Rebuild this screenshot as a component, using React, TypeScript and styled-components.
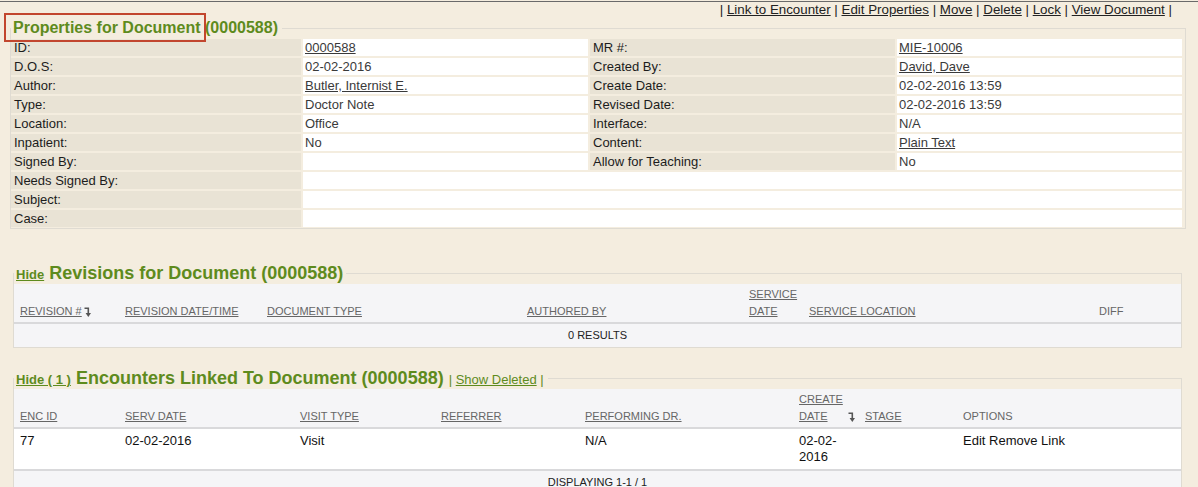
import React from 'react';
import styled, { createGlobalStyle } from 'styled-components';

const GREEN = '#5e8b1d';

const GlobalStyle = createGlobalStyle`
  html {
    overflow: hidden;
  }
  body {
    margin: 0;
    background: #f4eddf;
    font-family: 'Liberation Sans', Arial, sans-serif;
    color: #222;
  }
`;

const Page = styled.div`
  margin-top: 1px;
  border-top: 1px solid #6a6a6a;
`;

const ActionBar = styled.div`
  height: 16px;
  line-height: 16px;
  font-size: 13.33px;
  text-align: right;
  padding-right: 26px;
  color: #222;
`;

const ActionLink = styled.a`
  color: #222;
  text-decoration: underline;
  cursor: pointer;
`;

const Box = styled.fieldset<{ $top: number; $left: number; $right: number }>`
  margin: ${(p) => p.$top}px ${(p) => p.$right}px 0 ${(p) => p.$left}px;
  padding: 0;
  border: 1px solid #dfdbd2;
  min-width: 0;
`;

const Legend = styled.legend<{ $size: number; $lh: number; $padRight: number }>`
  position: relative;
  padding: 0 ${(p) => p.$padRight}px 0 2px;
  font-size: ${(p) => p.$size}px;
  line-height: ${(p) => p.$lh}px;
  font-weight: bold;
  color: ${GREEN};
  white-space: nowrap;
`;

const Marker = styled.span`
  position: absolute;
  left: -7px;
  top: -5px;
  width: 202px;
  height: 29px;
  box-sizing: border-box;
  border: 2px solid #c2462e;
  pointer-events: none;
`;

const HideLink = styled.a`
  font-size: 13px;
  line-height: 14px;
  font-weight: bold;
  color: ${GREEN};
  text-decoration: underline;
  cursor: pointer;
`;

const Extra = styled.span`
  font-size: 13px;
  line-height: 14px;
  font-weight: normal;
  color: ${GREEN};
`;

const ExtraLink = styled.a`
  color: ${GREEN};
  text-decoration: underline;
  cursor: pointer;
`;

const PropGrid = styled.div`
  display: grid;
  grid-template-columns: 290px 285px 305px 285px;
  grid-auto-rows: 17px;
  gap: 2px;
  margin: 1px 2px 1px 0;
  font-size: 13px;
  line-height: 17px;
`;

const Label = styled.div`
  background: #e9e3d5;
  padding: 0 3px;
  color: #1c1c1c;
  white-space: nowrap;
`;

const Value = styled.div<{ $span?: number }>`
  background: #fff;
  padding: 0 2px;
  color: #3a3a3a;
  white-space: nowrap;
  grid-column: span ${(p) => p.$span ?? 1};
`;

const ValueLink = styled.a`
  color: #3a3a3a;
  text-decoration: underline;
  cursor: pointer;
`;

const Panel = styled.div`
  background: #f5f5f7;
`;

const Table = styled.table`
  width: 100%;
  table-layout: fixed;
  border-collapse: separate;
  border-spacing: 0;
`;

const Col = styled.col<{ $w: number }>`
  width: ${(p) => p.$w}px;
`;

const Th = styled.th<{ $nowrap?: boolean }>`
  height: 40px;
  box-sizing: border-box;
  padding: 2px 6px;
  border-bottom: 2px solid #d9d9db;
  vertical-align: bottom;
  text-align: left;
  font-size: 11px;
  line-height: 17px;
  font-weight: normal;
  color: #666;
  white-space: ${(p) => (p.$nowrap ? 'nowrap' : 'normal')};
`;

const HeadLink = styled.a`
  color: #666;
  text-decoration: underline;
  cursor: pointer;
`;

const SortMark = styled.svg<{ $gap: number }>`
  margin-left: ${(p) => p.$gap}px;
  vertical-align: -2px;
`;

const EmptyCell = styled.td`
  height: 23px;
  padding: 0;
  text-align: center;
  font-size: 11px;
  line-height: 23px;
  color: #222;
`;

const DataRow = styled.tr`
  background: #fff;
`;

const Td = styled.td`
  padding: 4px 6px;
  border-bottom: 2px solid #d9d9db;
  vertical-align: top;
  font-size: 13px;
  line-height: 16px;
  color: #111;
`;

const Footer = styled.div`
  padding-top: 3px;
  text-align: center;
  font-size: 11px;
  line-height: 16px;
  color: #222;
`;

const SortIcon: React.FC<{ gap: number }> = ({ gap }) => (
  <SortMark $gap={gap} width="8" height="10" viewBox="0 0 8 10">
    <path d="M0.5 1.2 H4.3 V7" fill="none" stroke="#555" strokeWidth="1.6" />
    <polygon points="1.6,6 7,6 4.3,10" fill="#555" />
  </SortMark>
);

type Cell = { text: string; link?: boolean };
type PropRow = { label: string; value: Cell; label2?: string; value2?: Cell };

const props: PropRow[] = [
  { label: 'ID:', value: { text: '0000588', link: true }, label2: 'MR #:', value2: { text: 'MIE-10006', link: true } },
  { label: 'D.O.S:', value: { text: '02-02-2016' }, label2: 'Created By:', value2: { text: 'David, Dave', link: true } },
  { label: 'Author:', value: { text: 'Butler, Internist E.', link: true }, label2: 'Create Date:', value2: { text: '02-02-2016 13:59' } },
  { label: 'Type:', value: { text: 'Doctor Note' }, label2: 'Revised Date:', value2: { text: '02-02-2016 13:59' } },
  { label: 'Location:', value: { text: 'Office' }, label2: 'Interface:', value2: { text: 'N/A' } },
  { label: 'Inpatient:', value: { text: 'No' }, label2: 'Content:', value2: { text: 'Plain Text', link: true } },
  { label: 'Signed By:', value: { text: '' }, label2: 'Allow for Teaching:', value2: { text: 'No' } },
  { label: 'Needs Signed By:', value: { text: '' } },
  { label: 'Subject:', value: { text: '' } },
  { label: 'Case:', value: { text: '' } },
];

const show = (c: Cell) => (c.link ? <ValueLink>{c.text}</ValueLink> : c.text);

const actions = ['Link to Encounter', 'Edit Properties', 'Move', 'Delete', 'Lock', 'View Document'];

const App: React.FC = () => {
  return (
    <Page>
      <GlobalStyle />
      <ActionBar>
        |{' '}
        {actions.map((a) => (
          <React.Fragment key={a}>
            <ActionLink>{a}</ActionLink> |{' '}
          </React.Fragment>
        ))}
      </ActionBar>

      <Box $top={0} $left={10} $right={12}>
        <Legend $size={16} $lh={20} $padRight={4}>
          <Marker />
          Properties for Document (0000588)
        </Legend>
        <PropGrid>
          {props.map((r) => (
            <React.Fragment key={r.label}>
              <Label>{r.label}</Label>
              {r.label2 ? (
                <>
                  <Value>{show(r.value)}</Value>
                  <Label>{r.label2}</Label>
                  <Value>{r.value2 && show(r.value2)}</Value>
                </>
              ) : (
                <Value $span={3}>{show(r.value)}</Value>
              )}
            </React.Fragment>
          ))}
        </PropGrid>
      </Box>

      <Box $top={33} $left={13} $right={16}>
        <Legend $size={18} $lh={22} $padRight={3}>
          <HideLink>Hide</HideLink> Revisions for Document (0000588)
        </Legend>
        <Panel>
          <Table>
            <colgroup>
              <Col $w={105} />
              <Col $w={142} />
              <Col $w={260} />
              <Col $w={222} />
              <Col $w={60} />
              <Col $w={290} />
              <Col $w={88} />
            </colgroup>
            <thead>
              <tr>
                <Th>
                  <HeadLink>REVISION #</HeadLink>
                  <SortIcon gap={2} />
                </Th>
                <Th><HeadLink>REVISION DATE/TIME</HeadLink></Th>
                <Th><HeadLink>DOCUMENT TYPE</HeadLink></Th>
                <Th><HeadLink>AUTHORED BY</HeadLink></Th>
                <Th><HeadLink>SERVICE DATE</HeadLink></Th>
                <Th><HeadLink>SERVICE LOCATION</HeadLink></Th>
                <Th>DIFF</Th>
              </tr>
            </thead>
            <tbody>
              <tr>
                <EmptyCell colSpan={7}>0 RESULTS</EmptyCell>
              </tr>
            </tbody>
          </Table>
        </Panel>
      </Box>

      <Box $top={19} $left={13} $right={16}>
        <Legend $size={18} $lh={22} $padRight={4}>
          <HideLink>Hide ( 1 )</HideLink> Encounters Linked To Document (0000588){' '}
          <Extra>
            | <ExtraLink>Show Deleted</ExtraLink> |
          </Extra>
        </Legend>
        <Panel>
          <Table>
            <colgroup>
              <Col $w={105} />
              <Col $w={175} />
              <Col $w={141} />
              <Col $w={144} />
              <Col $w={214} />
              <Col $w={66} />
              <Col $w={98} />
              <Col $w={224} />
            </colgroup>
            <thead>
              <tr>
                <Th><HeadLink>ENC ID</HeadLink></Th>
                <Th><HeadLink>SERV DATE</HeadLink></Th>
                <Th><HeadLink>VISIT TYPE</HeadLink></Th>
                <Th><HeadLink>REFERRER</HeadLink></Th>
                <Th><HeadLink>PERFORMING DR.</HeadLink></Th>
                <Th $nowrap>
                  <HeadLink>
                    CREATE
                    <br />
                    DATE
                  </HeadLink>
                  <SortIcon gap={20} />
                </Th>
                <Th><HeadLink>STAGE</HeadLink></Th>
                <Th>OPTIONS</Th>
              </tr>
            </thead>
            <tbody>
              <DataRow>
                <Td>77</Td>
                <Td>02-02-2016</Td>
                <Td>Visit</Td>
                <Td></Td>
                <Td>N/A</Td>
                <Td>02-02-2016</Td>
                <Td></Td>
                <Td>Edit Remove Link</Td>
              </DataRow>
            </tbody>
          </Table>
          <Footer>DISPLAYING 1-1 / 1</Footer>
        </Panel>
      </Box>
    </Page>
  );
};

export default App;
